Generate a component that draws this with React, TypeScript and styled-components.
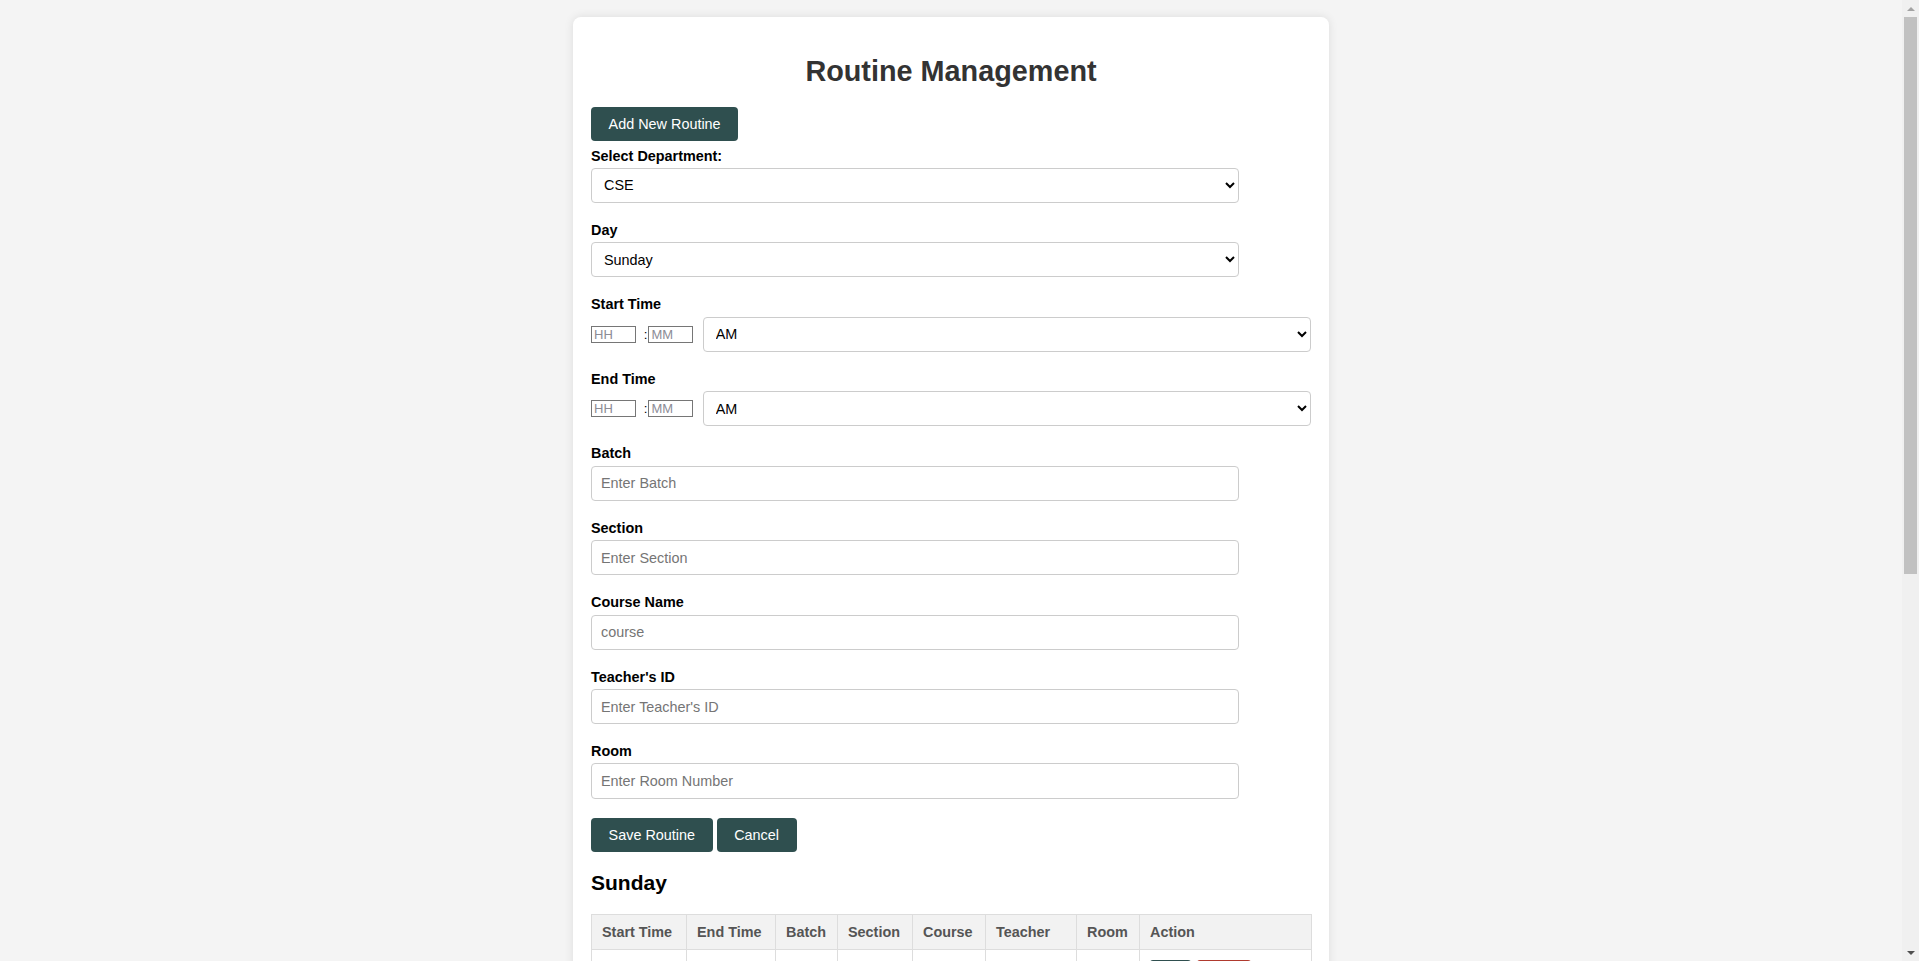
import React from "react";
import styled, { createGlobalStyle } from "styled-components";

const GlobalStyle = createGlobalStyle`
  html, body {
    margin: 0;
    padding: 0;
  }
  body {
    box-sizing: border-box;
    padding-right: 17px;
    background: #f4f4f4;
    font-family: "Liberation Sans", Arial, sans-serif;
    color: #000;
  }
`;

/* Imitation of the browser's classic vertical scrollbar seen in the reference */
const ScrollGutter = styled.div`
  position: fixed;
  top: 0;
  right: 0;
  width: 17px;
  height: 100vh;
  display: flex;
  flex-direction: column;
  background: #f0f0f0;
  z-index: 10;
`;

const ScrollArrow = styled.div<{ $down?: boolean }>`
  height: 17px;
  flex: none;
  display: flex;
  align-items: center;
  justify-content: center;
  &::before {
    content: "";
    width: 0;
    height: 0;
    border-left: 4px solid transparent;
    border-right: 4px solid transparent;
    ${(p) =>
      p.$down
        ? "border-top: 4px solid #505050;"
        : "border-bottom: 4px solid #a3a3a3;"}
  }
`;

const ScrollTrack = styled.div`
  flex: 1;
  display: flex;
  flex-direction: column;
  padding: 0 2px;
`;

const ScrollThumb = styled.div`
  height: 60.1%;
  background: #c1c1c1;
`;

const Card = styled.div`
  box-sizing: border-box;
  width: 756px;
  margin: 17px auto 20px;
  padding: 21px 18px 20px;
  background: #fff;
  border-radius: 8px;
  box-shadow: 0 0 10px rgba(0, 0, 0, 0.1);
`;

const Title = styled.h1`
  margin: 17px 0 19.5px;
  font-size: 28.8px;
  font-weight: bold;
  line-height: 32px;
  color: #333;
  text-align: center;
`;

const PrimaryButton = styled.button`
  box-sizing: border-box;
  height: 34px;
  padding: 0 17.6px;
  border: none;
  border-radius: 4px;
  background: #2f4f4f;
  color: #fff;
  font-family: "Liberation Sans", Arial, sans-serif;
  font-size: 14.4px;
  cursor: pointer;
`;

const AddButton = styled(PrimaryButton)`
  display: block;
  margin-bottom: 7px;
`;

const FormGroup = styled.div`
  margin-bottom: 19px;
`;

const Label = styled.label`
  display: block;
  margin-bottom: 4px;
  font-size: 14.4px;
  font-weight: bold;
  line-height: 16.1px;
  color: #000;
`;

const Select = styled.select<{ $fill?: boolean }>`
  box-sizing: border-box;
  width: ${(p) => (p.$fill ? "auto" : "90%")};
  flex: ${(p) => (p.$fill ? "1" : "none")};
  height: 35.4px;
  padding: 0 8px;
  border: 1px solid #ccc;
  border-radius: 4px;
  background: #fff;
  color: #000;
  font-family: "Liberation Sans", Arial, sans-serif;
  font-size: 14.4px;
`;

const TextInput = styled.input`
  box-sizing: border-box;
  display: block;
  width: 90%;
  height: 35.4px;
  padding: 0 9px;
  border: 1px solid #ccc;
  border-radius: 4px;
  background: #fff;
  font-family: "Liberation Sans", Arial, sans-serif;
  font-size: 14.4px;
  &::placeholder {
    color: #757575;
  }
`;

const TimeRow = styled.div`
  display: flex;
  align-items: center;
`;

const TimeInput = styled.input`
  box-sizing: border-box;
  width: 44.7px;
  height: 17.3px;
  padding: 0 2px;
  border: 1px solid #767676;
  border-radius: 0;
  font-family: "Liberation Sans", Arial, sans-serif;
  font-size: 13px;
  &::placeholder {
    color: #8c8c96;
  }
`;

const Colon = styled.span`
  margin: 0 1px 0 8px;
  font-size: 13.33px;
  line-height: 1;
`;

const TimeSelectWrap = styled.div`
  flex: 1;
  display: flex;
  margin-left: 9.6px;
`;

const ButtonRow = styled.div`
  display: flex;
  gap: 4px;
`;

const DayHeading = styled.h3`
  margin: 19px 0;
  font-size: 21px;
  font-weight: bold;
  line-height: 24.1px;
  color: #000;
`;

const Table = styled.table`
  width: 100%;
  border-collapse: collapse;
  table-layout: fixed;
`;

const Th = styled.th<{ $w: number }>`
  box-sizing: border-box;
  width: ${(p) => p.$w}px;
  padding: 9px 10px;
  border: 1px solid #ddd;
  background: #f2f2f2;
  color: #555;
  font-size: 14.4px;
  font-weight: bold;
  text-align: left;
  line-height: 16.1px;
`;

const Td = styled.td`
  box-sizing: border-box;
  padding: 9px 10px;
  border: 1px solid #ddd;
  font-size: 14.4px;
  line-height: 16.1px;
  color: #333;
  white-space: nowrap;
  overflow: hidden;
  vertical-align: middle;
`;

const SmallButton = styled.button<{ $danger?: boolean }>`
  margin-right: 6px;
  padding: 1px 10px;
  border: none;
  border-radius: 3px;
  background: ${(p) => (p.$danger ? "#b03a2e" : "#2f4f4f")};
  color: #fff;
  font-family: "Liberation Sans", Arial, sans-serif;
  font-size: 12px;
  line-height: 14px;
  vertical-align: middle;
`;

const columns: { label: string; w: number }[] = [
  { label: "Start Time", w: 95 },
  { label: "End Time", w: 89 },
  { label: "Batch", w: 62 },
  { label: "Section", w: 75 },
  { label: "Course", w: 73 },
  { label: "Teacher", w: 91 },
  { label: "Room", w: 63 },
  { label: "Action", w: 172 },
];

type Row = [string, string, string, string, string, string, string];

const schedule: { day: string; rows: Row[] }[] = [
  {
    day: "Sunday",
    rows: [
      ["09:00 AM", "10:30 AM", "57", "A", "DBMS", "T-1021", "402"],
      ["10:30 AM", "12:00 PM", "57", "B", "OOP", "T-1034", "405"],
      ["12:30 PM", "02:00 PM", "58", "A", "DSA", "T-1008", "301"],
      ["02:00 PM", "03:30 PM", "59", "C", "ML", "T-1045", "510"],
    ],
  },
  {
    day: "Monday",
    rows: [
      ["09:00 AM", "10:30 AM", "58", "B", "OS", "T-1012", "402"],
      ["10:30 AM", "12:00 PM", "57", "A", "CN", "T-1021", "303"],
      ["12:30 PM", "02:00 PM", "59", "A", "DSA", "T-1008", "301"],
      ["02:00 PM", "03:30 PM", "60", "B", "AI", "T-1045", "507"],
    ],
  },
  {
    day: "Tuesday",
    rows: [
      ["09:00 AM", "10:30 AM", "57", "C", "SE", "T-1030", "406"],
      ["10:30 AM", "12:00 PM", "58", "A", "DBMS", "T-1021", "402"],
      ["12:30 PM", "02:00 PM", "60", "A", "OOP", "T-1034", "405"],
      ["02:00 PM", "03:30 PM", "59", "B", "CN", "T-1012", "303"],
    ],
  },
];

const TimeField: React.FC<{ label: string }> = ({ label }) => (
  <FormGroup>
    <Label>{label}</Label>
    <TimeRow>
      <TimeInput placeholder="HH" />
      <Colon>:</Colon>
      <TimeInput placeholder="MM" />
      <TimeSelectWrap>
        <Select $fill defaultValue="AM">
          <option>AM</option>
          <option>PM</option>
        </Select>
      </TimeSelectWrap>
    </TimeRow>
  </FormGroup>
);

const TextField: React.FC<{ label: string; placeholder: string }> = ({ label, placeholder }) => (
  <FormGroup>
    <Label>{label}</Label>
    <TextInput placeholder={placeholder} />
  </FormGroup>
);

export default function App() {
  return (
    <>
      <GlobalStyle />
      <ScrollGutter aria-hidden="true">
        <ScrollArrow />
        <ScrollTrack>
          <ScrollThumb />
        </ScrollTrack>
        <ScrollArrow $down />
      </ScrollGutter>
      <Card>
        <Title>Routine Management</Title>
        <AddButton>Add New Routine</AddButton>

        <FormGroup>
          <Label>Select Department:</Label>
          <Select defaultValue="CSE">
            <option>CSE</option>
            <option>EEE</option>
            <option>BBA</option>
          </Select>
        </FormGroup>

        <FormGroup>
          <Label>Day</Label>
          <Select defaultValue="Sunday">
            <option>Sunday</option>
            <option>Monday</option>
            <option>Tuesday</option>
            <option>Wednesday</option>
            <option>Thursday</option>
          </Select>
        </FormGroup>

        <TimeField label="Start Time" />
        <TimeField label="End Time" />

        <TextField label="Batch" placeholder="Enter Batch" />
        <TextField label="Section" placeholder="Enter Section" />
        <TextField label="Course Name" placeholder="course" />
        <TextField label="Teacher's ID" placeholder="Enter Teacher's ID" />
        <TextField label="Room" placeholder="Enter Room Number" />

        <ButtonRow>
          <PrimaryButton>Save Routine</PrimaryButton>
          <PrimaryButton>Cancel</PrimaryButton>
        </ButtonRow>

        {schedule.map((d) => (
          <section key={d.day}>
            <DayHeading>{d.day}</DayHeading>
            <Table>
              <thead>
                <tr>
                  {columns.map((c) => (
                    <Th key={c.label} $w={c.w}>
                      {c.label}
                    </Th>
                  ))}
                </tr>
              </thead>
              <tbody>
                {d.rows.map((r, i) => (
                  <tr key={i}>
                    {r.map((cell, j) => (
                      <Td key={j}>{cell}</Td>
                    ))}
                    <Td>
                      <SmallButton>Edit</SmallButton>
                      <SmallButton $danger>Delete</SmallButton>
                    </Td>
                  </tr>
                ))}
              </tbody>
            </Table>
          </section>
        ))}
      </Card>
    </>
  );
}
